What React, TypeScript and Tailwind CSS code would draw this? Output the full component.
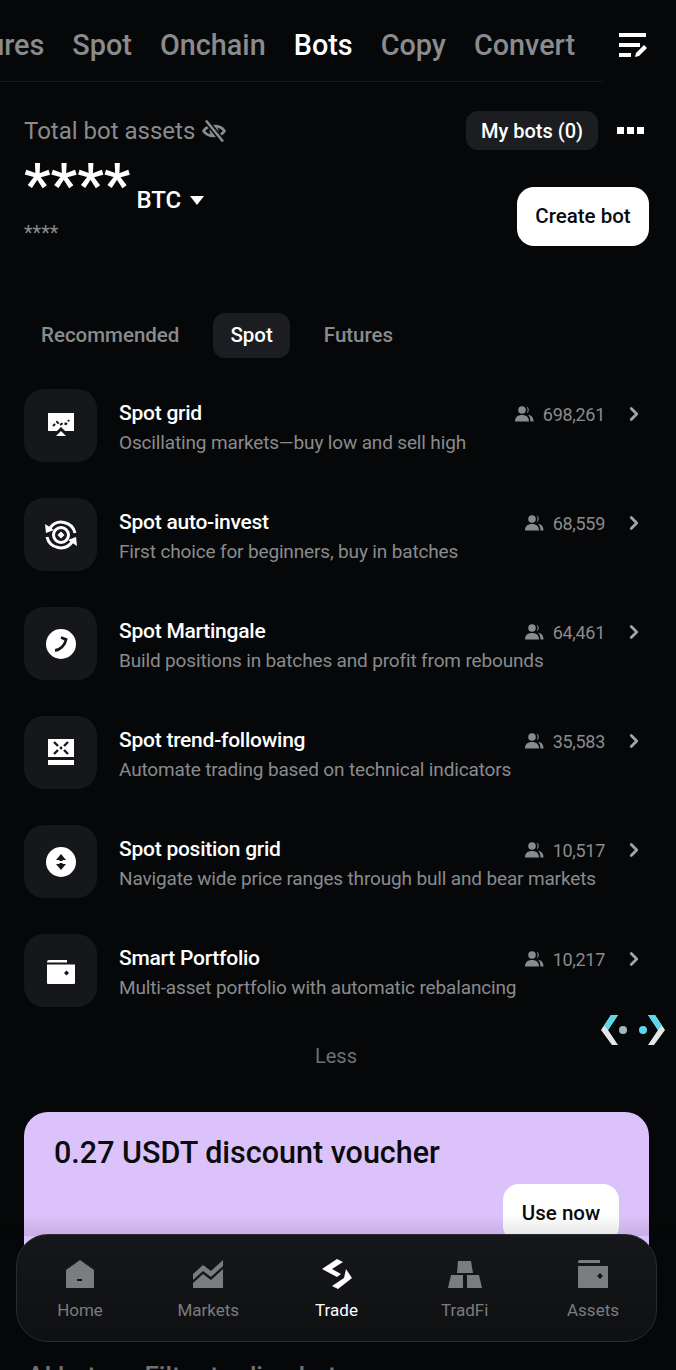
import type { FC, ReactNode } from 'react';
import { ChevronRight } from 'lucide-react';

const TABS = ['Futures', 'Spot', 'Onchain', 'Bots', 'Copy', 'Convert'];

const GridIcon = () => (
  <svg width="28" height="28" viewBox="0 0 28 28">
    <path d="M1 1h26v18h-9l-4-4-4 4H1z" fill="#fff" />
    <path d="M14 19l5 5H9z" fill="#fff" />
    <path d="M6 14l4-4 3 3 3-2 3 1 3-4" fill="none" stroke="#16171b" strokeWidth="2" strokeDasharray="3 2" />
  </svg>
);

const AutoInvestIcon = () => (
  <svg width="34" height="34" viewBox="0 0 34 34" fill="none">
    <path d="M6 10A14 14 0 0 1 31 15" stroke="#fff" strokeWidth="3" />
    <path d="M28 24A14 14 0 0 1 3 19" stroke="#fff" strokeWidth="3" />
    <path d="M1 6l1 9 8-3z" fill="#fff" />
    <path d="M33 28l-1-9-8 3z" fill="#fff" />
    <circle cx="17" cy="17" r="7.5" stroke="#fff" strokeWidth="3" />
    <path d="M17 13.5l3.500 3.500-3.500 3.500-3.500-3.500z" fill="#fff" />
  </svg>
);

const MartingaleIcon = () => (
  <svg width="30" height="30" viewBox="0 0 30 30" fill="none">
    <circle cx="15" cy="15" r="15" fill="#fff" />
    <path d="M9 21.5c5-.5 10-5 11-11l-5-2" stroke="#16171b" strokeWidth="2.8" />
  </svg>
);

const TrendIcon = () => (
  <svg width="26" height="28" viewBox="0 0 26 28">
    <path d="M0 0h26v18H0zM0 21h26v5H0z" fill="#fff" />
    <path d="M6 3l4 4M20 3l-4 4M6 15l4-4M20 15l-4-4" stroke="#16171b" strokeWidth="2.4" />
    <circle cx="13" cy="9" r="1.4" fill="#16171b" />
  </svg>
);

const PositionIcon = () => (
  <svg width="30" height="30" viewBox="0 0 30 30">
    <circle cx="15" cy="15" r="15" fill="#fff" />
    <path d="M15 7l5 6h-3.5v1h-3v-1H10zM15 23l-5-6h3.500v-1h3v1H20z" fill="#16171b" />
  </svg>
);

const PortfolioIcon = () => (
  <svg width="28" height="26" viewBox="0 0 28 26">
    <path d="M0 4a2 2 0 0 1 2-2h18v2.5H0zM0 6.5h28V25a1 1 0 0 1-1 1H1a1 1 0 0 1-1-1z" fill="#fff" />
    <path d="M19.5 12.5l2.500 2.500-2.500 2.500-2.500-2.500z" fill="#16171b" />
  </svg>
);

const BOTS: { name: string; desc: string; count: string; icon: FC }[] = [
  { name: 'Spot grid', desc: 'Oscillating markets—buy low and sell high', count: '698,261', icon: GridIcon },
  { name: 'Spot auto-invest', desc: 'First choice for beginners, buy in batches', count: '68,559', icon: AutoInvestIcon },
  { name: 'Spot Martingale', desc: 'Build positions in batches and profit from rebounds', count: '64,461', icon: MartingaleIcon },
  { name: 'Spot trend-following', desc: 'Automate trading based on technical indicators', count: '35,583', icon: TrendIcon },
  { name: 'Spot position grid', desc: 'Navigate wide price ranges through bull and bear markets', count: '10,517', icon: PositionIcon },
  { name: 'Smart Portfolio', desc: 'Multi-asset portfolio with automatic rebalancing', count: '10,217', icon: PortfolioIcon },
];

const UsersIcon = () => (
  <svg width="19" height="16" viewBox="0 0 19 16" fill="#8a8b8d">
    <circle cx="7" cy="4" r="3.8" />
    <path d="M0 15.5c0-4.500 3-6.500 7-6.500s7 2 7 6.500zM11.500 .6a3.800 3.800 0 0 1 0 7c1.500-2 1.500-5 0-7zM13 8.800c3.500.4 5.500 2.700 5.500 6.700h-3c0-3-.8-5-2.500-6.700z" />
  </svg>
);

const NavItem = ({ label, active, children }: { label: string; active?: boolean; children: ReactNode }) => (
  <div className={`flex flex-col items-center w-[128.25px] shrink-0 ${active ? 'text-white' : 'text-[#7b7c7e]'}`}>
    <div className="h-[34px] flex items-center justify-center">{children}</div>
    <span className="text-[17px] leading-[20px] mt-[9px]">{label}</span>
  </div>
);

export default function App() {
  return (
    <div className="relative w-[676px] h-[1370px] overflow-hidden bg-[#060708] text-white font-['Roboto',sans-serif]">
      {/* top tabs */}
      <div className="flex items-center h-[82px] w-[603px] border-b border-[#17181a] overflow-hidden">
        <div className="flex gap-[28px] -ml-[53px] text-[28.8px] font-medium text-[#8a8b8d] shrink-0 pt-[10px]">
          {TABS.map((tab) => (
            <span key={tab} className={tab === 'Bots' ? 'text-white' : ''}>{tab}</span>
          ))}
        </div>
      </div>
      <svg className="absolute left-[619px] top-[33px]" width="28" height="25" viewBox="0 0 28 25" fill="#fff">
        <path d="M0 0h27v4H0zM0 10h21v4H0zM0 20h12v4H0zM16 24l1-4 8-8 3 3-8 8z" />
      </svg>

      {/* assets header */}
      <div className="flex justify-between pl-[24px] pr-[27px] pt-[30px]">
        <div>
          <div className="flex items-center h-[38px] text-[24px] text-[#8a8b8d]">
            Total bot assets
            <svg className="ml-[7px]" width="24" height="24" viewBox="0 0 24 24" fill="none">
              <path d="M1.5 12C5.5 5.5 18.5 5.5 22.5 12C18.5 18.5 5.5 18.5 1.5 12z" stroke="#8a8b8d" strokeWidth="2.6" />
              <circle cx="12" cy="12" r="4.5" fill="#8a8b8d" />
              <path d="M4 1.5L21 22.5" stroke="#060708" strokeWidth="5.5" />
              <path d="M4 1.5L21 22.5" stroke="#8a8b8d" strokeWidth="2.6" />
            </svg>
          </div>
          <div className="flex items-start h-[54px] mt-[8px]">
            <span className="text-[60px] leading-[54px] font-medium">****</span>
            <span className="text-[24px] font-medium mt-[28px] ml-[6px] leading-[28px]">BTC</span>
            <svg className="ml-[9px] mt-[38px]" width="14" height="10" viewBox="0 0 14 10" fill="#fff">
              <path d="M0 0h14L7 9z" />
            </svg>
          </div>
          <div className="text-[20px] leading-[24px] text-[#8a8b8d] mt-[9px]">****</div>
        </div>
        <div className="flex flex-col items-end -mt-[1px]">
          <div className="flex items-center">
            <div className="h-[39px] px-[15px] rounded-[12px] bg-[#1c1d21] flex items-center text-[20px] font-medium">My bots (0)</div>
            <div className="flex gap-[3px] ml-[19px] mr-[5px]">
              <span className="w-[7px] h-[7px] bg-white" />
              <span className="w-[7px] h-[7px] bg-white" />
              <span className="w-[7px] h-[7px] bg-white" />
            </div>
          </div>
          <div className="mt-[37px] h-[59px] w-[132px] rounded-[17px] bg-white text-[#0a0a0a] flex items-center justify-center text-[20.5px] font-medium">Create bot</div>
        </div>
      </div>

      {/* category tabs */}
      <div className="flex items-center gap-[34px] mt-[67px] px-[24px] text-[20.5px] font-medium text-[#8a8b8d]">
        <span className="ml-[17px]">Recommended</span>
        <span className="h-[45px] px-[17px] rounded-[12px] bg-[#1c1d21] text-white flex items-center">Spot</span>
        <span>Futures</span>
      </div>

      {/* bot list */}
      <div className="flex flex-col gap-[36px] mt-[31px] pl-[24px] pr-[27px]">
        {BOTS.map((bot) => {
          const Icon = bot.icon;
          return (
            <div key={bot.name} className="flex items-center h-[73px]">
              <div className="w-[73px] h-[73px] rounded-[20px] bg-[#16171b] flex items-center justify-center shrink-0">
                <Icon />
              </div>
              <div className="flex-1 ml-[22px] pt-[6px]">
                <div className="flex items-center h-[28px]">
                  <span className="text-[21px] tracking-[-0.25px] font-medium flex-1">{bot.name}</span>
                  <UsersIcon />
                  <span className="text-[18px] tracking-[-0.3px] text-[#8a8b8d] ml-[9px]">{bot.count}</span>
                  <ChevronRight className="w-[22px] h-[22px] ml-[18px] mr-[4px] text-[#a4a5a7]" strokeWidth={3} />
                </div>
                <div className="text-[19px] tracking-[-0.15px] leading-[28px] text-[#8a8b8d] mt-[1px]">{bot.desc}</div>
              </div>
            </div>
          );
        })}
      </div>

      <div className="text-center text-[20px] text-[#6f7072] mt-[36px] leading-[26px] pr-[4px]">Less</div>

      {/* voucher */}
      <div className="ml-[24px] mr-[27px] mt-[43px] h-[211px] rounded-[24px] bg-[#dcc2fb] px-[30px] pt-[20px] text-[#0b0b0c]">
        <div className="text-[30.5px] leading-[42px] font-medium">0.27 USDT discount voucher</div>
        <div className="flex justify-end mt-[10px]">
          <div className="w-[116px] h-[58px] rounded-[16px] bg-white flex items-center justify-center text-[20.5px] font-medium">Use now</div>
        </div>
      </div>
      <div className="flex gap-[35px] px-[27px] mt-[34px] text-[26px] font-medium text-[#6f7072]">
        <span>AI bots</span>
        <span>Filter trading bots</span>
      </div>

      {/* floating widget */}
      <svg className="absolute left-[599px] top-[1014px]" width="68" height="32" viewBox="0 0 68 32">
        <path d="M12 1h7L9 16l10 15h-6L2 16z" fill="#e4e6e8" />
        <path d="M12 1h7L9 16 5 12z" fill="#5ad7ea" />
        <path d="M56 1h-7l10 15-10 15h6l11-15z" fill="#e4e6e8" />
        <path d="M56 1h-7l10 15 4-4z" fill="#5ad7ea" />
        <circle cx="24" cy="16" r="4" fill="#9fb9c0" />
        <circle cx="44" cy="16" r="4" fill="#5ad7ea" />
      </svg>

      {/* bottom nav */}
      <div className="absolute left-0 right-0 top-[1214px] h-[22px] bg-gradient-to-b from-transparent to-black/10" />
      <div className="absolute left-[16px] top-[1234px] w-[641px] h-[108px] rounded-[32px] bg-gradient-to-b from-[#16171a] to-[#0f1012] border border-[#2a2b2e] flex items-start justify-center pt-[22px]">
        <NavItem label="Home">
          <svg width="28" height="28" viewBox="0 0 28 28" fill="currentColor">
            <path d="M14 0l14 10v18H0V10zM11 19v2h5v-2z" fillRule="evenodd" />
          </svg>
        </NavItem>
        <NavItem label="Markets">
          <svg width="30" height="28" viewBox="0 0 30 28" fill="currentColor">
            <path d="M0 14L10 5l8 6L30 0v6L18 17l-8-6L0 20zM0 28v-5l10-9 8 6 12-11v19z" />
          </svg>
        </NavItem>
        <NavItem label="Trade" active>
          <svg width="30" height="30" viewBox="0 0 30 30" fill="#fff">
            <path d="M15 0l6 3-11 7 9 5-4 3L0 10zM24 10l6 9-14 11-6-3 12-8z" />
          </svg>
        </NavItem>
        <NavItem label="TradFi">
          <svg width="34" height="27" viewBox="0 0 34 27" fill="currentColor">
            <path d="M10 0h13l2 12H9zM3 14h12v13H0zM19 14h12l3 13H19z" />
          </svg>
        </NavItem>
        <NavItem label="Assets">
          <svg width="30" height="28" viewBox="0 0 30 28" fill="currentColor">
            <path d="M0 2a2 2 0 0 1 2-2h20v3H0zM0 6h30v22H0zM22 13l3 3-3 3-3-3z" fillRule="evenodd" />
          </svg>
        </NavItem>
      </div>
    </div>
  );
}
